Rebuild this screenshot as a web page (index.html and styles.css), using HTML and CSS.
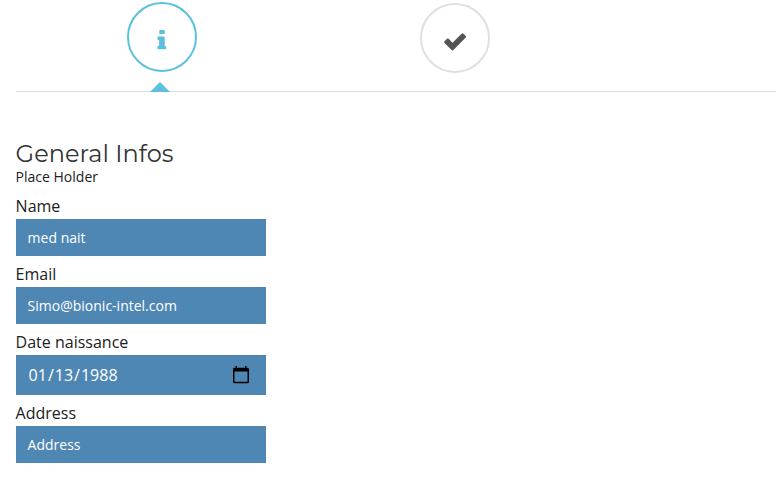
FILE: index.html
```html
<!DOCTYPE html>
<html lang="en">
<head>
<meta charset="utf-8">
<title>General Infos</title>
<link rel="stylesheet" href="styles.css">
</head>
<body>
<nav class="steps">
  <div class="step active"><span class="circle"><svg width="10" height="20" viewBox="0 0 10 20"><path d="M3 0h4q.7 0 .7.7v2.700q0 .7-.7.7H3q-.7 0-.7-.7V.7Q2.300 0 3 0zM1.200 6.600h5.700q.8 0 .8.8v8.600h.7q.8 0 .8.8v1.600q0 .8-.8.8H1.200q-.8 0-.8-.8v-1.600q0-.8.8-.8h.9v-6h-.9q-.8 0-.8-.8V7.400q0-.8.8-.8z"/></svg></span></div>
  <div class="step"><span class="circle"><svg width="24" height="18" viewBox="0 0 24 18"><path d="M4 5.800 1.500 8.300q-.8.800 0 1.600l7.100 7.100q.9.800 1.800 0L22.800 4.600q.8-.8 0-1.600L20.400.7q-.9-.8-1.800 0L9.500 9.800 5.700 5.800q-.8-.8-1.700 0z"/></svg></span></div>
</nav>
<form class="form">
  <h1 class="title">General Infos</h1>
  <p class="subtitle">Place Holder</p>
  <label class="label">Name</label>
  <div class="field">med nait</div>
  <label class="label">Email</label>
  <div class="field">Simo@bionic-intel.com</div>
  <label class="label">Date naissance</label>
  <div class="field date"><span class="date-value"><span>01</span><span>/</span><span>13</span><span>/</span><span>1988</span></span><svg width="18" height="20" viewBox="0 0 18 20"><path fill-rule="evenodd" d="M3.500 1H5v1.800h8V1h1.500v1.800h1q1.500 0 1.500 1.500v12.400q0 1.500-1.500 1.500h-13Q1 18.200 1 16.700V4.300q0-1.500 1.500-1.500h1zM2.500 6.500v10.300h13V6.500z"/></svg></div>
  <label class="label">Address</label>
  <div class="field">Address</div>
</form>
</body>
</html>
```

FILE: styles.css
```css
* { box-sizing: border-box; }
body { margin: 0; background: #fff; color: #212121; font-family: "Open Sans", sans-serif; overflow: hidden; }
.steps { display: flex; height: 92px; margin-left: 16px; border-bottom: 1px solid #ddd; }
.step { position: relative; width: 293px; padding-top: 3px; display: flex; justify-content: center; }
.step.active { width: 292px; padding-top: 2px; }
.circle { display: flex; align-items: center; justify-content: center; width: 70px; height: 70px; border: 2px solid #e0e0e0; border-radius: 50%; }
.circle svg { fill: #555; margin-top: 7px; }
.active .circle { border-color: #5bc0de; }
.active svg { fill: #5bc0de; margin: 5px 0 0; }
.active::after { content: ""; position: absolute; bottom: -1px; left: 134px; border: 10px solid transparent; border-top: 0; border-bottom-color: #5bc0de; }
.form { width: 250px; margin: 48px 0 0 16px; text-indent: -0.4px; }
.title { margin: 0; color: #333; font: 400 24px/27px Montserrat, "Open Sans", sans-serif; letter-spacing: 0.04px; white-space: nowrap; }
.subtitle { margin: 0; padding-bottom: 1px; font-size: 14px; line-height: 20px; }
.label { display: block; font-size: 16px; line-height: 24px; margin: 6px 0 1px; }
.field { height: 37px; display: flex; align-items: center; padding: 0 12px; background: #4f87b4; color: #fff; font-size: 14px; }
.date { height: 40px; font-size: 16px; justify-content: space-between; padding: 0 16px 0 11.6px; text-indent: 0; }
.date-value { display: flex; }
.date-value span:nth-child(odd) { padding: 0 1px; }
.date svg { fill: #000; }
```
